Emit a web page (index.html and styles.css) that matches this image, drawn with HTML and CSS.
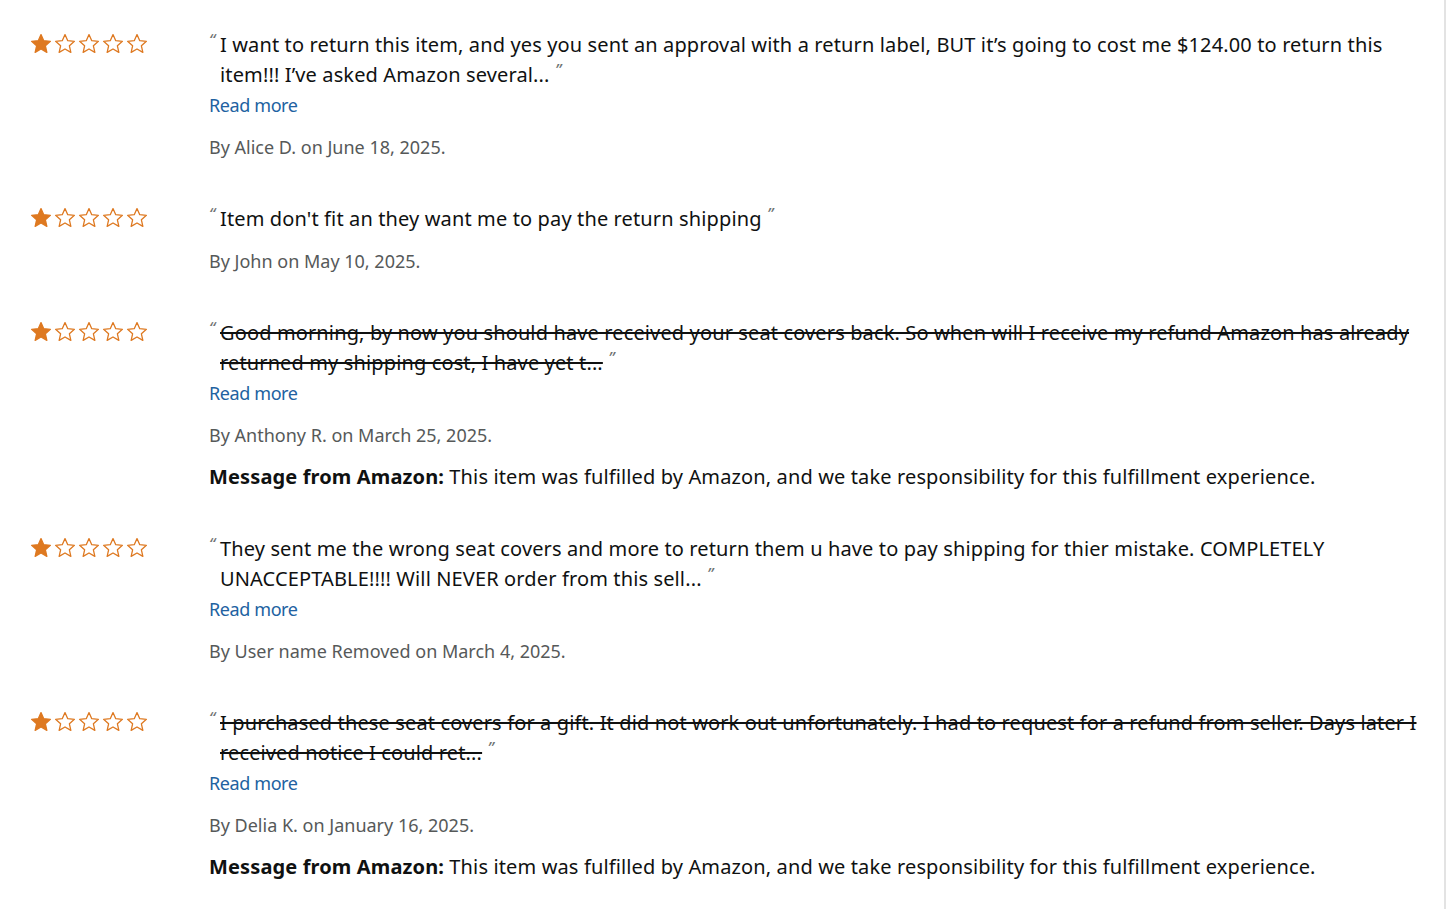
FILE: index.html
```html
<!DOCTYPE html>
<html lang="en">

<head>
  <meta charset="UTF-8">
  <title>Customer reviews</title>
  <link rel="stylesheet" href="styles.css">
</head>

<body>
  <svg width="0" height="0" class="defs">
    <defs>
      <path id="star" d="M11 1.6l2.75 6.1 6.65.65-5 4.45 1.45 6.55L11 16l-5.85 3.35 1.45-6.55-5-4.45 6.65-.65z" />
    </defs>
  </svg>
  <div class="page">

    <div class="review">
      <div class="stars">
        <svg class="star full"><use href="#star" /></svg>
        <svg class="star"><use href="#star" /></svg>
        <svg class="star"><use href="#star" /></svg>
        <svg class="star"><use href="#star" /></svg>
        <svg class="star"><use href="#star" /></svg>
      </div>
      <div class="body">
        <p class="quote"><span class="mark open">&ldquo;</span><span class="text">I want to return this item, and yes you sent an approval with a return label, BUT it’s going to cost me $124.00 to return this item!!! I’ve asked Amazon several...</span> <span class="mark">&rdquo;</span></p>
        <a class="more" href="#">Read more</a>
        <p class="author">By Alice D. on June 18, 2025.</p>
      </div>
    </div>

    <div class="review">
      <div class="stars">
        <svg class="star full"><use href="#star" /></svg>
        <svg class="star"><use href="#star" /></svg>
        <svg class="star"><use href="#star" /></svg>
        <svg class="star"><use href="#star" /></svg>
        <svg class="star"><use href="#star" /></svg>
      </div>
      <div class="body">
        <p class="quote"><span class="mark open">&ldquo;</span><span class="text">Item don't fit an they want me to pay the return shipping</span> <span class="mark">&rdquo;</span></p>
        <p class="author">By John on May 10, 2025.</p>
      </div>
    </div>

    <div class="review">
      <div class="stars">
        <svg class="star full"><use href="#star" /></svg>
        <svg class="star"><use href="#star" /></svg>
        <svg class="star"><use href="#star" /></svg>
        <svg class="star"><use href="#star" /></svg>
        <svg class="star"><use href="#star" /></svg>
      </div>
      <div class="body">
        <p class="quote"><span class="mark open">&ldquo;</span><span class="text struck">Good morning, by now you should have received your seat covers back. So when will I receive my refund Amazon has already returned my shipping cost, I have yet t...</span> <span class="mark">&rdquo;</span></p>
        <a class="more" href="#">Read more</a>
        <p class="author">By Anthony R. on March 25, 2025.</p>
        <p class="message"><b>Message from Amazon:</b> This item was fulfilled by Amazon, and we take responsibility for this fulfillment experience.</p>
      </div>
    </div>

    <div class="review">
      <div class="stars">
        <svg class="star full"><use href="#star" /></svg>
        <svg class="star"><use href="#star" /></svg>
        <svg class="star"><use href="#star" /></svg>
        <svg class="star"><use href="#star" /></svg>
        <svg class="star"><use href="#star" /></svg>
      </div>
      <div class="body">
        <p class="quote"><span class="mark open">&ldquo;</span><span class="text">They sent me the wrong seat covers and more to return them u have to pay shipping for thier mistake. COMPLETELY UNACCEPTABLE!!!! Will NEVER order from this sell...</span> <span class="mark">&rdquo;</span></p>
        <a class="more" href="#">Read more</a>
        <p class="author">By User name Removed on March 4, 2025.</p>
      </div>
    </div>

    <div class="review">
      <div class="stars">
        <svg class="star full"><use href="#star" /></svg>
        <svg class="star"><use href="#star" /></svg>
        <svg class="star"><use href="#star" /></svg>
        <svg class="star"><use href="#star" /></svg>
        <svg class="star"><use href="#star" /></svg>
      </div>
      <div class="body">
        <p class="quote"><span class="mark open">&ldquo;</span><span class="text struck">I purchased these seat covers for a gift. It did not work out unfortunately. I had to request for a refund from seller. Days later I received notice I could ret...</span> <span class="mark">&rdquo;</span></p>
        <a class="more" href="#">Read more</a>
        <p class="author">By Delia K. on January 16, 2025.</p>
        <p class="message"><b>Message from Amazon:</b> This item was fulfilled by Amazon, and we take responsibility for this fulfillment experience.</p>
      </div>
    </div>

  </div>
</body>

</html>
```

FILE: styles.css
```css
html,
body {
  margin: 0;
  padding: 0;
  background-color: #fff;
}

body {
  font-family: 'Noto Sans', 'Open Sans', sans-serif;
  color: #0f1111;
}

.defs {
  position: absolute;
}

.page {
  box-sizing: border-box;
  width: 1446px;
  min-height: 100vh;
  padding: 30px 20px 0 30px;
  border-right: 2px solid #e3e3e3;
}

.review {
  display: grid;
  grid-template-columns: 179px 1fr;
  margin-bottom: 42px;
}

.stars {
  display: flex;
  gap: 1px;
  padding-top: 3px;
  height: 23px;
}

.star {
  width: 23px;
  height: 23px;
  fill: #fff;
  stroke: #de7921;
  stroke-width: 1.3;
  stroke-linejoin: round;
}

.star.full {
  fill: #de7921;
}

.body p {
  margin: 0;
}

.quote {
  font-size: 20px;
  line-height: 30px;
  letter-spacing: 0.13px;
  padding-left: 11px;
  text-indent: -11px;
}

.mark {
  font-size: 17px;
  line-height: 1;
  color: #6f7373;
  vertical-align: 6px;
  font-style: italic;
}

.mark.open {
  display: inline-block;
  width: 11px;
  text-indent: 0;
}

.struck {
  text-decoration: line-through;
  text-decoration-thickness: 2px;
}

.more {
  display: block;
  font-size: 18px;
  letter-spacing: -0.4px;
  line-height: 30px;
  color: #2162a1;
  text-decoration: none;
}

.author {
  margin-top: 12px !important;
  font-size: 18px;
  line-height: 30px;
  color: #565959;
}

.message {
  margin-top: 12px !important;
  font-size: 20px;
  line-height: 30px;
  letter-spacing: 0.13px;
}

.message b {
  font-weight: 700;
}
```
